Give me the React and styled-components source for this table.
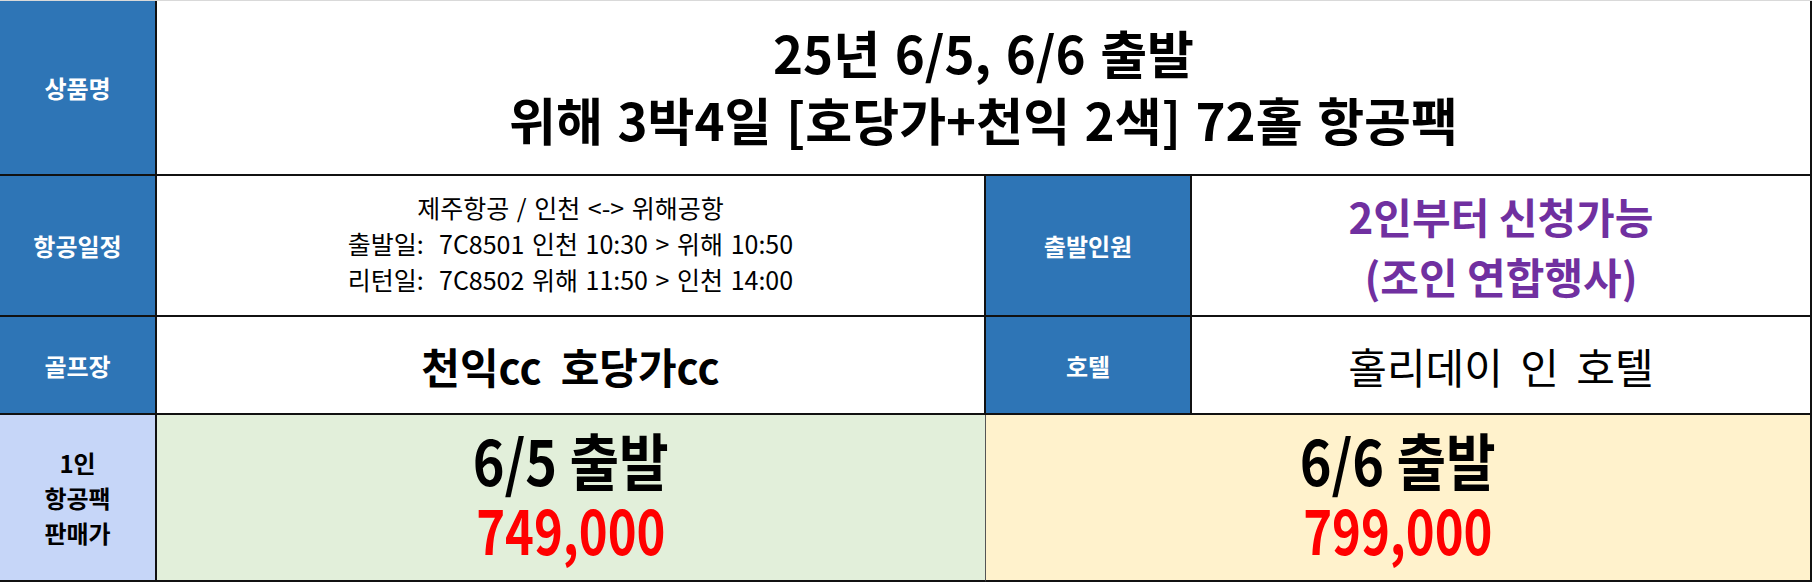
import React from 'react';
import styled, { createGlobalStyle } from 'styled-components';

const GlobalStyle = createGlobalStyle`
  html, body {
    margin: 0;
    padding: 0;
    background: #ffffff;
  }
  body {
    font-family: "Noto Sans CJK KR", "Noto Sans", sans-serif;
    color: #000;
  }
`;

const Sheet = styled.div`
  width: 1812px;
  display: grid;
  grid-template-columns: 157px 829px 206px 620px;
  grid-template-rows: 175px 141px 98px 167px;
  border-top: 1px solid #d9d9d9;
  box-sizing: border-box;
`;

const Cell = styled.div`
  box-sizing: border-box;
  display: flex;
  flex-direction: column;
  align-items: center;
  justify-content: center;
  text-align: center;
  border-right: 2px solid #111;
  border-bottom: 2px solid #111;
  background: ${(p) => p.$bg || '#ffffff'};
  grid-column: ${(p) => p.$span || 'auto'};
`;

const Label = styled(Cell)`
  background: ${(p) => (p.$light ? '#c6d6f8' : '#2e75b6')};
  color: ${(p) => (p.$light ? '#000' : '#fff')};
  font-size: 24px;
  font-weight: 700;
  line-height: 35px;
`;

const Title = styled.div`
  font-size: 51px;
  font-weight: 700;
  line-height: 67px;
  word-spacing: 3px;
  margin-top: -4px;
`;

const Flight = styled.div`
  font-size: 25px;
  line-height: 36px;
  word-spacing: 2px;
  white-space: pre;
  margin-top: -6px;
`;

const Purple = styled.div`
  color: #7030a0;
  font-size: 42px;
  font-weight: 700;
  line-height: 60px;
`;

const Golf = styled.div`
  font-size: 42px;
  font-weight: 700;
  white-space: pre;
`;

const Hotel = styled.div`
  font-size: 42px;
  font-weight: 400;
  word-spacing: 8px;
`;

const PriceCell = styled(Cell)`
  border-right: ${(p) => (p.$last ? '2px solid #111' : '1px solid #555')};
  padding-bottom: 7px;
`;

const Big = styled.div`
  font-size: 62px;
  font-weight: 700;
  line-height: 69px;
  color: ${(p) => p.$color || '#000'};
  transform: scaleX(${(p) => p.$squeeze || 0.87});
`;

export default function App() {
  return (
    <>
      <GlobalStyle />
      <Sheet>
        <Label>상품명</Label>
        <Cell $span="span 3">
          <Title>
            25년 6/5, 6/6 출발
            <br />
            위해 3박4일 [호당가+천익 2색] 72홀 항공팩
          </Title>
        </Cell>

        <Label>항공일정</Label>
        <Cell>
          <Flight>
            {'제주항공 / 인천 <-> 위해공항'}
            <br />
            {'출발일:  7C8501 인천 10:30 > 위해 10:50'}
            <br />
            {'리턴일:  7C8502 위해 11:50 > 인천 14:00'}
          </Flight>
        </Cell>
        <Label>출발인원</Label>
        <Cell>
          <Purple>
            2인부터 신청가능
            <br />
            (조인 연합행사)
          </Purple>
        </Cell>

        <Label>골프장</Label>
        <Cell>
          <Golf>{'천익cc  호당가cc'}</Golf>
        </Cell>
        <Label>호텔</Label>
        <Cell>
          <Hotel>홀리데이 인 호텔</Hotel>
        </Cell>

        <Label $light>
          1인
          <br />
          항공팩
          <br />
          판매가
        </Label>
        <PriceCell $bg="#e2efda">
          <Big>6/5 출발</Big>
          <Big $color="#ff0000" $squeeze={0.79}>749,000</Big>
        </PriceCell>
        <PriceCell $bg="#fff2cc" $span="span 2" $last>
          <Big>6/6 출발</Big>
          <Big $color="#ff0000" $squeeze={0.79}>799,000</Big>
        </PriceCell>
      </Sheet>
    </>
  );
}
